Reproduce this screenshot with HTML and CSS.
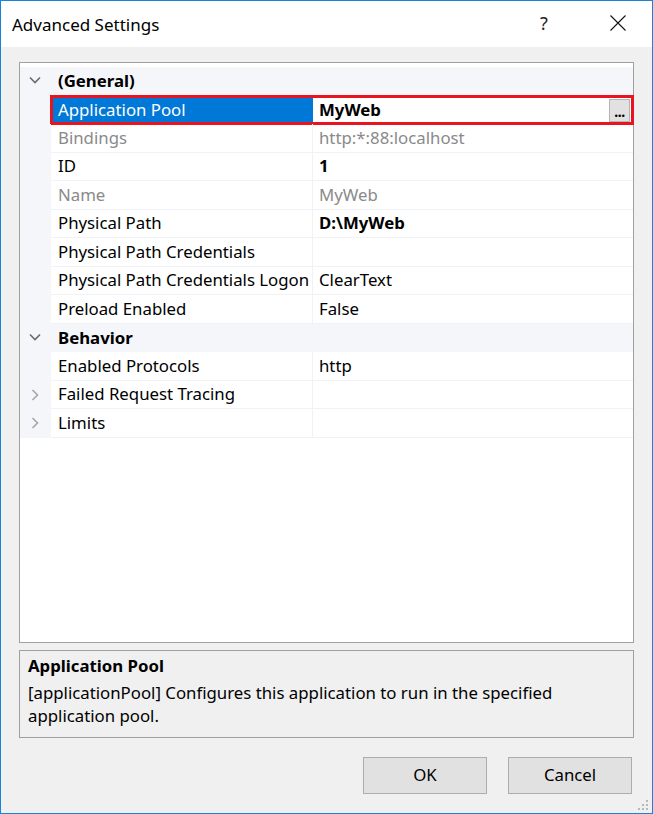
FILE: index.html
```
<!DOCTYPE html>
<html>
<head>
<meta charset="utf-8">
<link rel="stylesheet" href="styles.css">
</head>
<body>
<div class="window">
  <div class="titlebar">
    <span class="title">Advanced Settings</span>
    <span class="help">?</span>
    <span class="close"><svg width="16" height="16" viewBox="0 0 16 16"><path d="M0.5 0.5 L15.5 15.5 M15.5 0.5 L0.5 15.5" stroke="#111" stroke-width="1.1" fill="none"/></svg></span>
  </div>
  <div class="content">
    <div class="grid">
      <div class="row cat">
        <div class="gutter"><svg class="chev" width="12" height="8" viewBox="0 0 12 8"><path d="M1 1.5 L6 6.5 L11 1.5" stroke="#6b6b6b" stroke-width="1.6" fill="none"/></svg></div>
        <div class="catname">(General)</div>
      </div>
      <div class="row prop selected">
        <div class="gutter"></div>
        <div class="cells">
          <div class="name">Application Pool</div>
          <div class="value bold">MyWeb<span class="ellipsis">...</span></div>
        </div>
      </div>
      <div class="row prop">
        <div class="gutter"></div>
        <div class="cells"><div class="name dim">Bindings</div><div class="value dim">http:*:88:localhost</div></div>
      </div>
      <div class="row prop">
        <div class="gutter"></div>
        <div class="cells"><div class="name">ID</div><div class="value bold">1</div></div>
      </div>
      <div class="row prop">
        <div class="gutter"></div>
        <div class="cells"><div class="name dim">Name</div><div class="value dim">MyWeb</div></div>
      </div>
      <div class="row prop">
        <div class="gutter"></div>
        <div class="cells"><div class="name">Physical Path</div><div class="value bold">D:\MyWeb</div></div>
      </div>
      <div class="row prop">
        <div class="gutter"></div>
        <div class="cells"><div class="name">Physical Path Credentials</div><div class="value"></div></div>
      </div>
      <div class="row prop">
        <div class="gutter"></div>
        <div class="cells"><div class="name">Physical Path Credentials Logon</div><div class="value">ClearText</div></div>
      </div>
      <div class="row prop">
        <div class="gutter"></div>
        <div class="cells"><div class="name">Preload Enabled</div><div class="value">False</div></div>
      </div>
      <div class="row cat">
        <div class="gutter"><svg class="chev" width="12" height="8" viewBox="0 0 12 8"><path d="M1 1.5 L6 6.5 L11 1.5" stroke="#6b6b6b" stroke-width="1.6" fill="none"/></svg></div>
        <div class="catname">Behavior</div>
      </div>
      <div class="row prop">
        <div class="gutter"></div>
        <div class="cells"><div class="name">Enabled Protocols</div><div class="value">http</div></div>
      </div>
      <div class="row prop">
        <div class="gutter"><svg class="chevr" width="8" height="12" viewBox="0 0 8 12"><path d="M1.5 1 L6.5 6 L1.5 11" stroke="#a6a6a6" stroke-width="1.6" fill="none"/></svg></div>
        <div class="cells"><div class="name">Failed Request Tracing</div><div class="value"></div></div>
      </div>
      <div class="row prop">
        <div class="gutter"><svg class="chevr" width="8" height="12" viewBox="0 0 8 12"><path d="M1.5 1 L6.5 6 L1.5 11" stroke="#a6a6a6" stroke-width="1.6" fill="none"/></svg></div>
        <div class="cells"><div class="name">Limits</div><div class="value"></div></div>
      </div>
    </div>
    <div class="desc">
      <div class="desc-title">Application Pool</div>
      <div class="desc-text">[applicationPool] Configures this application to run in the specified application pool.</div>
    </div>
    <div class="buttons">
      <button class="btn">OK</button>
      <button class="btn">Cancel</button>
    </div>
    <svg class="grip" width="12" height="12" viewBox="0 0 12 12" fill="#b8b8b8">
      <rect x="9" y="1" width="2" height="2"/>
      <rect x="5" y="5" width="2" height="2"/><rect x="9" y="5" width="2" height="2"/>
      <rect x="1" y="9" width="2" height="2"/><rect x="5" y="9" width="2" height="2"/><rect x="9" y="9" width="2" height="2"/>
    </svg>
  </div>
</div>
</body>
</html>
```

FILE: styles.css
```
* { box-sizing: border-box; }
html, body { margin: 0; padding: 0; background: #ffffff; }
body {
  font-family: "Noto Sans", "Open Sans", sans-serif;
  font-size: 16.8px;
  color: #000;
}
.window {
  width: 653px;
  height: 814px;
  border: 1px solid #1883d7;
  display: flex;
  flex-direction: column;
  background: #f0f0f0;
}
.titlebar {
  height: 46px;
  background: #fff;
  display: flex;
  align-items: center;
  padding-left: 11px;
  flex: none;
}
.title { font-size: 17px; flex: 1; padding-top: 1px; color: #000; }
.help { font-size: 18px; width: 20px; margin-right: 50px; color: #222; padding-bottom: 2px; }
.close { width: 16px; height: 16px; margin-right: 26px; display: flex; margin-bottom: 2px; }
.content {
  flex: 1;
  position: relative;
  padding: 15px 18px 0 18px;
  display: flex;
  flex-direction: column;
}
.grid {
  height: 581px;
  background: #fff;
  border: 1px solid #a0a0a0;
  padding-top: 4px;
  flex: none;
}
.row {
  height: 28.5px;
  display: flex;
}
.gutter {
  width: 31px;
  flex: none;
  background: #f4f6f9;
  display: flex;
  align-items: center;
  justify-content: center;
}
.chev { margin-left: -2px; margin-top: -2px; }
.chevr { margin-left: -1px; }
.row.cat { background: #f4f6f9; }
.catname { font-weight: bold; padding-left: 7px; display: flex; align-items: center; padding-bottom: 1px; }
.cells {
  flex: 1;
  display: flex;
  border-bottom: 1px solid #eff2f6;
}
.name {
  width: 262px;
  flex: none;
  border-right: 1px solid #eff2f6;
  padding-left: 7px;
  display: flex;
  align-items: center;
  white-space: nowrap;
  padding-bottom: 1px;
}
.value {
  flex: 1;
  padding-left: 6px;
  display: flex;
  align-items: center;
  padding-bottom: 1px;
  position: relative;
}
.bold { font-weight: bold; }
.dim { color: #8a8a8a; }
.selected .cells {
  outline: 3px solid #e8141f;
  outline-offset: -2px;
  border-bottom: none;
}
.selected .name {
  background: #0078d7;
  color: #fff;
  margin: 2px 0 2px 2px;
  width: 260px;
  padding-left: 5px;
  border-right: none;
}
.ellipsis {
  position: absolute;
  right: 3px;
  top: 3px;
  width: 21px;
  height: 23px;
  background: #e1e1e1;
  border: 1px solid #b4b4b4;
  font-size: 14px;
  font-weight: bold;
  display: flex;
  align-items: center;
  justify-content: center;
  padding-top: 2px;
  letter-spacing: -0.5px;
}
.desc {
  margin-top: 7px;
  height: 88px;
  border: 1px solid #a0a0a0;
  padding: 3px 8px;
  flex: none;
}
.desc-title { font-weight: bold; line-height: 23px; margin-bottom: 4px; }
.desc-text { line-height: 23px; }
.buttons {
  display: flex;
  justify-content: flex-end;
  gap: 21px;
  margin-top: 19px;
  padding-right: 2px;
}
.btn {
  width: 124px;
  height: 37px;
  background: #e1e1e1;
  border: 1px solid #adadad;
  font-family: "Noto Sans", "Open Sans", sans-serif;
  font-size: 16.8px;
  color: #000;
  padding: 0 0 2px 0;
}
.grip {
  position: absolute;
  right: 3px;
  bottom: 2px;
}
```
